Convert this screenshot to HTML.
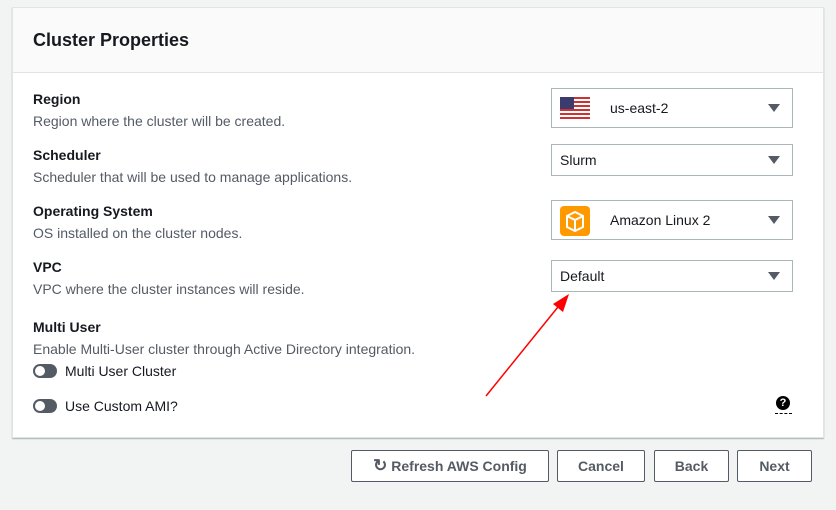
<!DOCTYPE html>
<html><head><style>
*{box-sizing:border-box;margin:0;padding:0}
body{width:836px;height:510px;background:#f2f3f3;font-family:"Liberation Sans",sans-serif;position:relative;overflow:hidden;color:#16191f}
.card{position:absolute;left:12px;top:7px;width:812px;height:431px;background:#fff;border:1px solid #e1e4e4;box-shadow:0 1px 1px rgba(0,28,36,.3)}
.hdr{height:65px;background:#fafafa;border-bottom:1px solid #e1e4e4;padding-left:20px;font-weight:bold;font-size:18px;line-height:64px}
.ab{position:absolute}
.lbl{font-weight:bold;font-size:14px}
.desc{font-size:14px;color:#545b64}
.sel{position:absolute;left:551px;width:242px;border:1px solid #aab7b8;background:#fff;font-size:14px}
.sel .t{position:absolute;top:50%;transform:translateY(-50%)}
.sel .car{position:absolute;right:12px;top:50%;margin-top:-4px;width:0;height:0;border-left:6px solid transparent;border-right:6px solid transparent;border-top:8px solid #545b64}
.tog{position:absolute;left:33px;width:24px;height:14px;border-radius:7px;background:#545b64}
.tog:after{content:"";position:absolute;left:2px;top:2px;width:10px;height:10px;border-radius:5px;background:#fff}
.btn{position:absolute;top:450px;height:32px;border:1px solid #545b64;border-radius:2px;background:#fff;font-weight:bold;font-size:14px;color:#545b64;text-align:center;line-height:30px}
</style></head><body>
<div class="card"><div class="hdr">Cluster Properties</div></div>
<div class="ab lbl" style="left:33px;top:91px">Region</div>
<div class="ab desc" style="left:33px;top:113px">Region where the cluster will be created.</div>
<div class="ab lbl" style="left:33px;top:147px">Scheduler</div>
<div class="ab desc" style="left:33px;top:169px">Scheduler that will be used to manage applications.</div>
<div class="ab lbl" style="left:33px;top:203px">Operating System</div>
<div class="ab desc" style="left:33px;top:225px">OS installed on the cluster nodes.</div>
<div class="ab lbl" style="left:33px;top:259px">VPC</div>
<div class="ab desc" style="left:33px;top:281px">VPC where the cluster instances will reside.</div>
<div class="ab lbl" style="left:33px;top:319px">Multi User</div>
<div class="ab desc" style="left:33px;top:341px">Enable Multi-User cluster through Active Directory integration.</div>
<div class="tog" style="top:364px"></div>
<div class="ab" style="left:65px;top:363px;font-size:14px">Multi User Cluster</div>
<div class="tog" style="top:399px"></div>
<div class="ab" style="left:65px;top:398px;font-size:14px">Use Custom AMI?</div>
<div class="ab" style="left:776px;top:396px;width:14px;height:14px;border-radius:7px;background:#000;color:#fff;font-size:11px;font-weight:bold;text-align:center;line-height:14px">?</div>
<div class="ab" style="left:775px;top:413px;width:17px;border-top:1px dashed #000"></div>

<div class="sel" style="top:88px;height:40px">
<svg class="ab" style="left:8px;top:8px" width="30" height="22" viewBox="0 0 30 22"><rect width="30" height="22" fill="#fff"/><g fill="#c33"><rect y="0" width="30" height="2"/><rect y="4" width="30" height="2"/><rect y="8" width="30" height="2"/><rect y="12" width="30" height="2"/><rect y="16" width="30" height="2"/><rect y="20" width="30" height="2"/></g><rect width="14" height="12" fill="#3c3b6e"/></svg>
<span class="t" style="left:58px">us-east-2</span><div class="car"></div></div>
<div class="sel" style="top:144px;height:32px"><span class="t" style="left:8px">Slurm</span><div class="car"></div></div>
<div class="sel" style="top:200px;height:40px">
<svg class="ab" style="left:8px;top:5px" width="30" height="30" viewBox="0 0 30 30"><rect width="30" height="30" rx="4" fill="#f90"/><path d="M7 10 L15 6 L23 10 L23 21 L15 25 L7 21 Z M7 10 L15 14 L23 10 M15 14 L15 25" fill="none" stroke="#fff" stroke-width="2"/></svg>
<span class="t" style="left:58px">Amazon Linux 2</span><div class="car"></div></div>
<div class="sel" style="top:260px;height:32px"><span class="t" style="left:8px">Default</span><div class="car"></div></div>

<svg class="ab" style="left:0;top:0" width="836" height="510"><line x1="486" y1="396" x2="562" y2="302" stroke="#f00" stroke-width="1.5"/><path d="M569 294 L553 304 L563 312 Z" fill="#f00"/></svg>

<div class="btn" style="left:351px;width:198px"><span style="font-size:17px">&#8635;</span> Refresh AWS Config</div>
<div class="btn" style="left:557px;width:88px">Cancel</div>
<div class="btn" style="left:654px;width:75px">Back</div>
<div class="btn" style="left:737px;width:75px">Next</div>
</body></html>
